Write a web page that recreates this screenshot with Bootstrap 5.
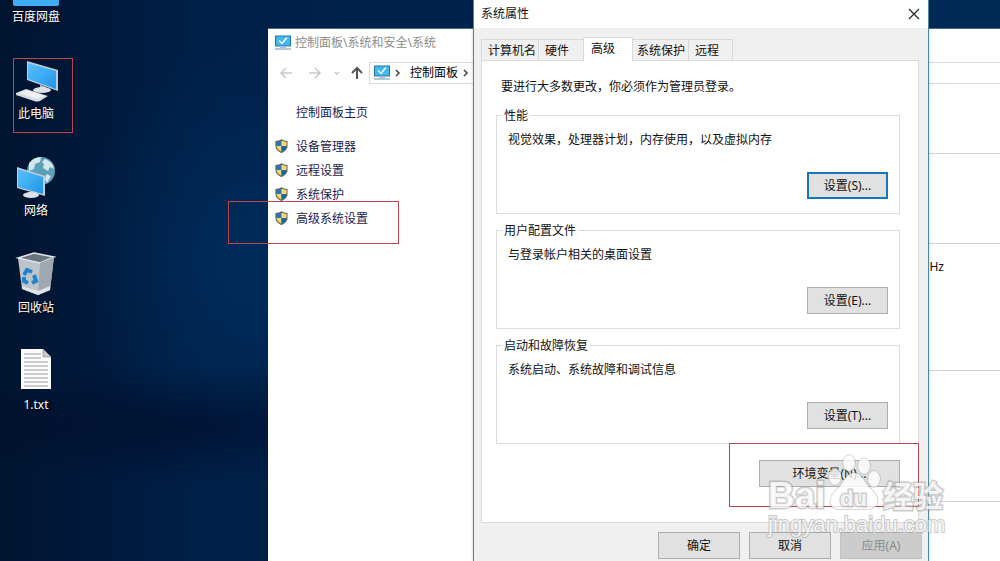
<!DOCTYPE html>
<html lang="zh-CN">
<head>
<meta charset="utf-8">
<meta name="viewport" content="width=device-width, initial-scale=1">
<title>系统属性</title>
<link rel="stylesheet" href="https://cdn.jsdelivr.net/npm/bootstrap@5.3.0/dist/css/bootstrap.min.css">
<style>
body { font-family: "Noto Sans", "Noto Sans CJK SC", sans-serif; font-size: 12px; line-height: 18px; color: #111; }
a { text-decoration: none; }
.desktop { background:
  radial-gradient(ellipse 240px 60px at 190px 425px, rgba(0,8,32,.55), transparent),
  radial-gradient(ellipse 170px 230px at 250px 260px, #002c5b, transparent),
  linear-gradient(90deg, #00142f 0, #001f48 200px, #002a56 100%); }
/* desktop shortcuts */
.shortcuts { width: 72px; gap: 31px; }
.shortcut { color: #fff; text-shadow: 1px 1px 2px #000; }
.mark-box { border: 1px solid #b9474f; pointer-events: none; }
.mark-pc { inset: 1px -1px -10px 13px; }
.mark-adv { inset: -9px auto auto -47px; width: 171px; height: 43px; }
.mark-env { inset: -17px -19px -20px -30px; }
/* control panel window */
.win-cp { left: 268px; right: 0; top: 28px; min-height: 100%; background: #fff; border-top: 1px solid #4c6d83; }
.cp-title { height: 28px; padding-left: 7px; color: #8b8b8b; }
.cp-nav { height: 22px; margin-top: 5px; }
.cp-tools { width: 101px; }
.cp-address { border: 1px solid #d5d9dc; border-right: 0; }
.cp-side { width: 205px; padding: 20px 0 0 7px; gap: 6px; }
.cp-side a { color: #1c1c50; }
.cp-home { padding-left: 21px; margin-bottom: 10px; }
.cp-main section { border-bottom: 1px solid #d0d3d6; }
.sec-a { height: 70px; } .sec-b { height: 90px; }
.sec-c { height: 127px; padding: 14px 56px 0 0; } .sec-d { height: 131px; }
/* properties dialog */
.dlg { left: 473px; top: 0; width: 456px; min-height: 100%; background: #f0f0f0; border: solid #4d88a0; border-width: 0 1px; box-shadow: 0 0 3px rgba(0,0,0,.2); }
.dlg-title { height: 28px; background: #fff; padding: 0 8px 0 7px; }
.dlg-body { padding: 9px 9px 0 7px; }
.tabs { padding-left: 1px; }
.tab { height: 21px; padding: 1px 0 0 6px; text-align: left; border: 1px solid #d9d9d9; border-bottom: 0; margin-left: -1px; background: #f0f0f0; color: #111; }
.tab.active { height: 24px; background: #fff; margin-bottom: -1px; padding: 0 0 2px 7px; position: relative; }
.w-name { width: 58px; } .w-hw { width: 46px; } .w-adv { width: 50px; } .w-prot { width: 57px; padding-left: 4px; } .w-remote { width: 45px; }
.pane { background: #fff; border: 1px solid #d9d9d9; padding: 17px 18px 0 14px; height: 463px; }
.intro { padding-left: 5px; margin-bottom: 19px; }
.group { border: 1px solid #dcdcdc; height: 99px; margin-bottom: 16px; padding: 0 11px 14px 11px; }
.group legend { font-size: 12px; line-height: 18px; width: auto; float: none; margin: -9px 0 0 -6px; padding: 0 2px; background: #fff; align-self: flex-start; }
.group p { margin: 6px 0 0; }
.wbtn { height: 27px; border: 1px solid #adadad; background: #e1e1e1; color: #111; padding: 0; }
.wbtn.focus { border: 2px solid #1976b8; }
.wbtn:disabled { background: #ccc; border-color: #c2c2c2; color: #8b8b8b; }
.w-set { width: 81px; } .w-env { width: 141px; } .w-act { width: 82px; }
.dlg-foot { gap: 9px; margin-top: 9px; margin-right: -3px; }
.watermark { left: 760px; top: 450px; pointer-events: none; font-family: "Liberation Sans", "Noto Sans CJK SC", sans-serif; }
</style>
</head>
<body>
<svg class="position-absolute" width="0" height="0">
  <defs>
    <linearGradient id="scr" x1="0" y1="0" x2="1" y2="1"><stop offset="0" stop-color="#5bc0fa"/><stop offset=".5" stop-color="#3cacf3"/><stop offset="1" stop-color="#2292e6"/></linearGradient>
    <symbol id="monitor" viewBox="0 0 16 15"><path d="M0 0h16v11H0z" fill="#2477a8"/><path d="M1 1h14v9H1z" fill="#43b8ed"/><path d="M4 5l3 3 5-6" fill="none" stroke="#fff" stroke-width="1.4"/><path d="M5 11h6v1.500H5z" fill="#a9c5d3"/><path d="M0 13h16v1H0z" fill="#6d91a6"/></symbol>
    <symbol id="shield" viewBox="0 0 14 16"><path d="M7 0.500C5 2 3 2.500.5 2.500V8c0 3.500 3 6 6.500 7.500C10.500 14 13.500 11.500 13.500 8V2.500C11 2.500 9 2 7 .5z" fill="#5c6555"/><path d="M6.800 2C5 3 3.500 3.500 1.600 3.600V8h5.200z" fill="#2877b9"/><path d="M7 2c2 1 3.500 1.500 5.400 1.600V8H7z" fill="#f7d474"/><path d="M1.600 8H7v6.200C4 13 1.900 11 1.600 8z" fill="#f7d474"/><path d="M7 8h5.400c-.3 3-2.400 5-5.400 6.200z" fill="#1765a9"/></symbol>
  </defs>
</svg>
<main class="desktop position-relative overflow-hidden vh-100">
  <nav class="shortcuts d-flex flex-column" aria-label="桌面">
    <a href="#" class="shortcut d-flex flex-column align-items-center">
      <svg width="48" height="8"><path d="M1 0h46v4q0 2-2 2H3q-2 0-2-2z" fill="#41adf3"/></svg><span>百度网盘</span></a>
    <a href="#" class="shortcut position-relative d-flex flex-column align-items-center">
      <svg width="48" height="48"><path d="M15 4l31 9v21l-31-11z" fill="#b9cfdc"/><path d="M16 6l28 8v18l-28-10z" fill="url(#scr)"/><path d="M28 28l6 2v3l-6-1z" fill="#bcc5ca"/><ellipse cx="30" cy="33" rx="9" ry="3" fill="#dce2e5"/><path d="M4 36l10-4 22 7-8 5q-3 1-6 0L4 38z" fill="#d6dce0"/><path d="M7 36l8-3 18 6-8 3z" fill="#eef1f3"/></svg><span>此电脑</span>
      <i class="mark-box mark-pc position-absolute"></i></a>
    <a href="#" class="shortcut d-flex flex-column align-items-center">
      <svg width="48" height="48"><circle cx="29" cy="17" r="14" fill="#5b9fb9"/><path d="M17 9q5-6 12-6l-1 5-5 2-1 5-5 2zM33 5q8 3 9 10l-4-2-2 4-5-3 1-4-2-2zM34 20l5 2-4 7-2-3z" fill="#d3e8ed"/><path d="M5 13l28 9v20L5 34z" fill="#b9cfdc"/><path d="M6 15l25 8v17L6 33z" fill="url(#scr)"/><path d="M16 38l6 1v3l-6-1z" fill="#aab4ba"/><ellipse cx="19" cy="41" rx="8" ry="3" fill="#dce2e5"/></svg><span>网络</span></a>
    <a href="#" class="shortcut d-flex flex-column align-items-center">
      <svg width="48" height="48"><path d="M6 7l16-5 20 4-4 33-12 5-16-6z" fill="#bdc4ca"/><path d="M6 7l16-5 20 4-14 6z" fill="#68747e" stroke="#e2e7ea" stroke-width="1.500"/><path d="M28 12l14-6-4 33-12 5z" fill="#9fa8b0"/><path d="M10 35l16 5 12-5v4l-12 5-16-6z" fill="#dfe4e7"/><g fill="none" stroke="#1e84cf" stroke-width="4"><path d="M12 24l3-5 5 2"/><path d="M22 24l2 6-4 2"/><path d="M16 32l-4-2v-4"/></g></svg><span>回收站</span></a>
    <a href="#" class="shortcut d-flex flex-column align-items-center">
      <svg width="48" height="48"><path d="M9 1h22l8 8v32H9z" fill="#fcfcfc"/><path d="M31 1v8h8z" fill="#c5cacd" stroke="#89929a" stroke-width=".7"/><path d="M12 6h17M12 10h17M12 14h24M12 18h24M12 22h24M12 26h24M12 30h24M12 34h24M12 38h24" stroke="#9b9b9b"/></svg><span>1.txt</span></a>
  </nav>

  <section class="win-cp position-absolute">
    <div class="cp-title d-flex align-items-center"><svg class="me-1" width="16" height="16"><use href="#monitor"/></svg><span>控制面板\系统和安全\系统</span></div>
    <div class="cp-nav d-flex">
      <div class="cp-tools flex-shrink-0"><svg width="101" height="20" fill="none" stroke="#c9c9c9" stroke-width="1.500"><path d="M24 11H13m5-5l-5 5 5 5M41 11h11m-5-5l5 5-5 5M67 10l2 2 2-2"/><path d="M89 17V6m-5 5l5-5 5 5" stroke="#555" stroke-width="2"/></svg></div>
      <div class="cp-address flex-grow-1 d-flex align-items-center"><svg class="ms-1" width="16" height="16"><use href="#monitor"/></svg><svg width="20" height="10" fill="none" stroke="#444" stroke-width="1.500"><path d="M6 2l3 3-3 3"/></svg><a href="#" class="text-black">控制面板</a><svg width="20" height="10" fill="none" stroke="#444" stroke-width="1.500"><path d="M6 2l3 3-3 3"/></svg></div>
    </div>
    <div class="d-flex">
      <nav class="cp-side d-flex flex-column flex-shrink-0">
        <a href="#" class="cp-home">控制面板主页</a>
        <a href="#" class="d-flex"><svg class="me-2" width="13" height="16"><use href="#shield"/></svg>设备管理器</a>
        <a href="#" class="d-flex"><svg class="me-2" width="13" height="16"><use href="#shield"/></svg>远程设置</a>
        <a href="#" class="d-flex"><svg class="me-2" width="13" height="16"><use href="#shield"/></svg>系统保护</a>
        <a href="#" class="d-flex position-relative"><svg class="me-2" width="13" height="16"><use href="#shield"/></svg>高级系统设置<i class="mark-box mark-adv position-absolute"></i></a>
      </nav>
      <div class="cp-main flex-grow-1">
        <section class="sec-a"></section><section class="sec-b"></section>
        <section class="sec-c text-end">Hz</section><section class="sec-d"></section>
      </div>
    </div>
  </section>

  <section class="dlg position-absolute" role="dialog" aria-label="系统属性">
    <header class="dlg-title d-flex align-items-center justify-content-between"><span>系统属性</span>
      <button type="button" class="border-0 bg-transparent p-0 d-flex" aria-label="关闭"><svg width="12" height="12" stroke="#222" stroke-width="1.200"><path d="M1 1l10 10M11 1L1 11"/></svg></button></header>
    <div class="dlg-body">
      <div class="tabs d-flex align-items-end" role="tablist">
        <button type="button" role="tab" class="tab w-name">计算机名</button><button type="button" role="tab" class="tab w-hw">硬件</button><button type="button" role="tab" aria-selected="true" class="tab active w-adv">高级</button><button type="button" role="tab" class="tab w-prot">系统保护</button><button type="button" role="tab" class="tab w-remote">远程</button>
      </div>
      <div class="pane" role="tabpanel">
        <p class="intro">要进行大多数更改，你必须作为管理员登录。</p>
        <div class="group d-flex flex-column" role="group"><legend>性能</legend><p>视觉效果，处理器计划，内存使用，以及虚拟内存</p><button type="button" class="wbtn focus w-set mt-auto ms-auto">设置(S)...</button></div>
        <div class="group d-flex flex-column" role="group"><legend>用户配置文件</legend><p>与登录帐户相关的桌面设置</p><button type="button" class="wbtn w-set mt-auto ms-auto">设置(E)...</button></div>
        <div class="group d-flex flex-column" role="group"><legend>启动和故障恢复</legend><p>系统启动、系统故障和调试信息</p><button type="button" class="wbtn w-set mt-auto ms-auto">设置(T)...</button></div>
        <div class="d-flex justify-content-end"><div class="position-relative"><button type="button" class="wbtn w-env d-block">环境变量(N)...</button><i class="mark-box mark-env position-absolute"></i></div></div>
      </div>
      <footer class="dlg-foot d-flex justify-content-end"><button type="button" class="wbtn w-act">确定</button><button type="button" class="wbtn w-act">取消</button><button type="button" class="wbtn w-act" disabled>应用(A)</button></footer>
    </div>
  </section>

  <svg class="watermark position-absolute" width="200" height="96" fill="#fff" fill-opacity=".8" stroke="#999" stroke-opacity=".5" paint-order="stroke">
    <g stroke-width="1.500"><ellipse cx="89" cy="13" rx="6" ry="8"/><ellipse cx="104" cy="16" rx="6" ry="8"/><ellipse cx="75" cy="27" rx="6" ry="8"/><ellipse cx="114" cy="29" rx="6" ry="8"/><path d="M94 23c8 0 10 9 16 15 6 5 9 11 7 16-3 7-14 5-24 5s-18 2-22-4c-3-6 2-12 7-17 6-5 8-15 16-15z"/></g>
    <g stroke-width="3" font-weight="700"><text x="8" y="58" font-size="37">Bai</text><text x="80" y="56" font-size="22">du</text><text x="123" y="57" font-size="30">经验</text></g>
    <text x="8" y="82" font-size="22" stroke-width="2">jingyan.baidu.com</text>
  </svg>
</main>
<script src="https://cdn.jsdelivr.net/npm/bootstrap@5.3.0/dist/js/bootstrap.bundle.min.js"></script>
</body>
</html>
